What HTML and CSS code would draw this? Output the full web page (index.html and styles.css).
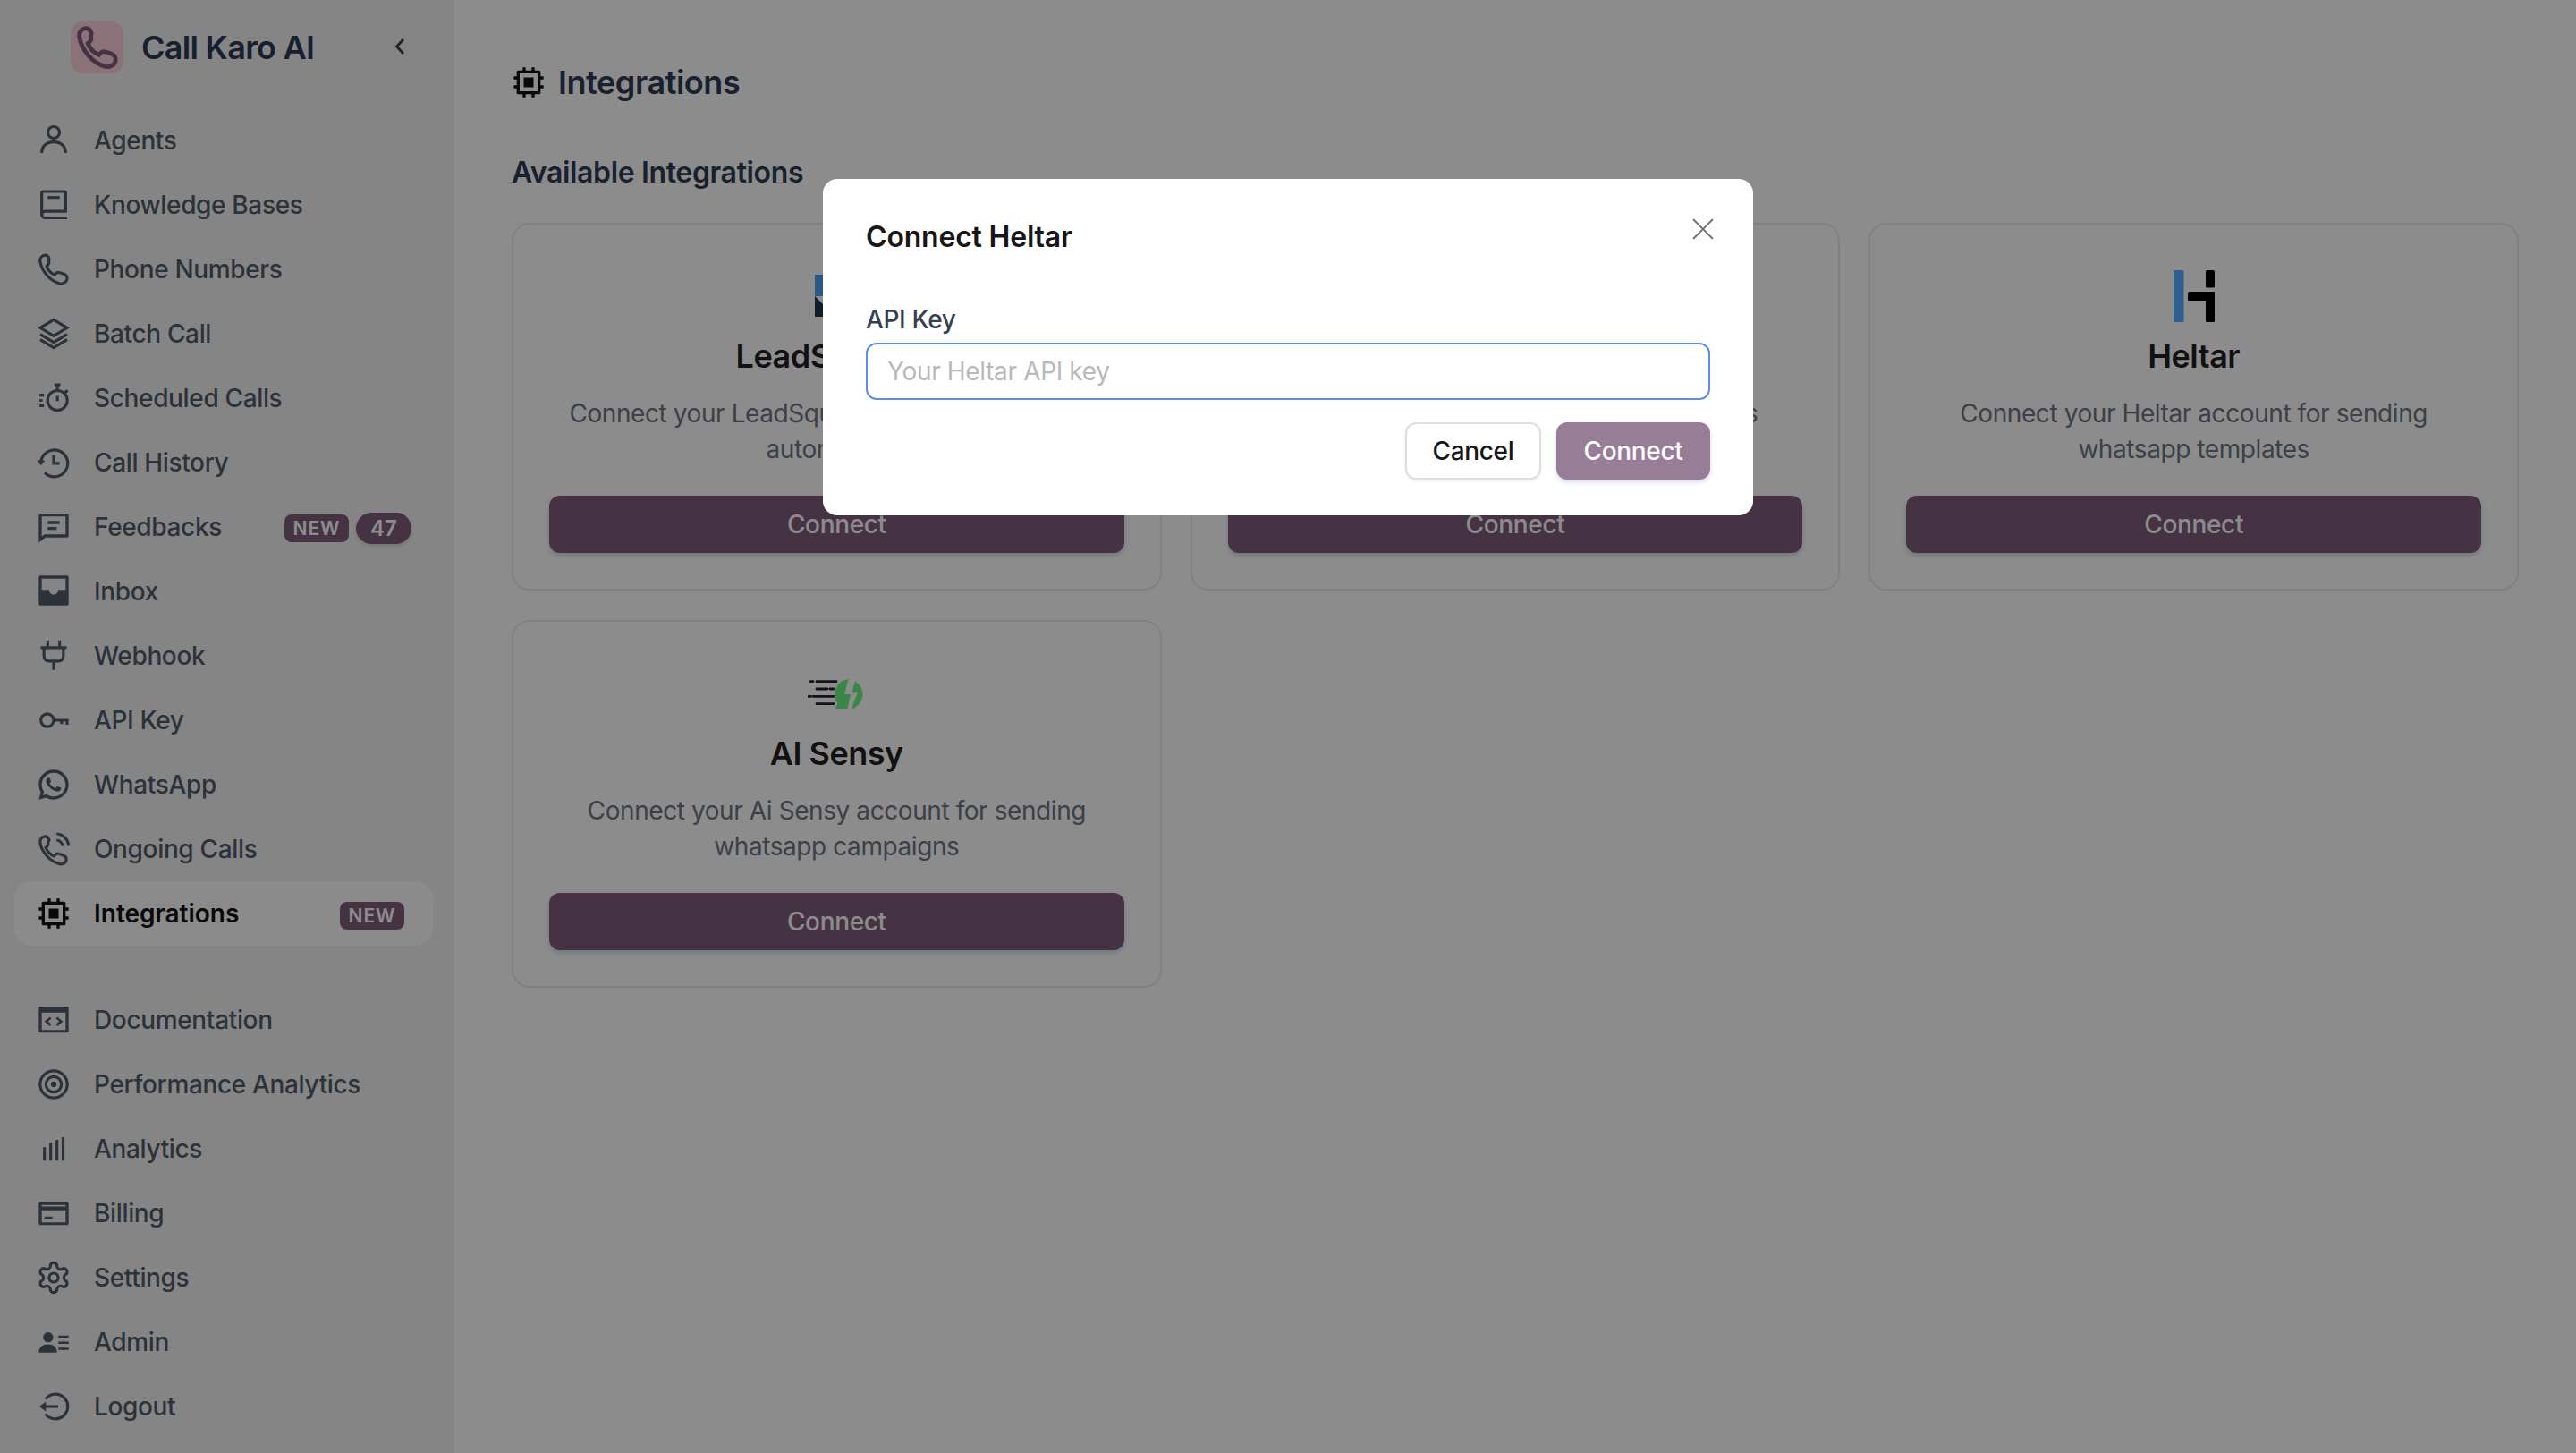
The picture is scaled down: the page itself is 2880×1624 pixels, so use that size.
FILE: index.html
```html
<!DOCTYPE html>
<html lang="en">
<head>
<meta charset="utf-8">
<title>Integrations</title>
<link rel="stylesheet" href="styles.css">
</head>
<body>
<div class="app">
  <aside class="sidebar">
    <div class="brand">
      <div class="brand-logo">
        <svg class="brand-phone" viewBox="0 0 24 24"><path d="M6.500 2.500C4 2.500 2.500 4.500 3 7c1 6 6.500 13 13 14.500 2.500.5 5-1 5-3.500 0-1.500-1-2.500-2.500-3l-2.500-.8c-1-.3-2 0-2.700.8l-.6.7c-2.500-1-4.500-3.200-5.500-5.700l.8-.7c.8-.7 1-1.700.7-2.700L9 5c-.5-1.500-1-2.500-2.500-2.500Z"/></svg>
      </div>
      <span class="brand-name">Call Karo AI</span>
      <svg class="collapse" viewBox="0 0 12 20"><path d="M10 2 2.500 10 10 18"/></svg>
    </div>
    <nav class="nav">
      <a class="item"><svg class="ico" viewBox="0 0 24 24"><circle cx="12" cy="6.600" r="3.900"/><path d="M4 20.400C4 15.500 7.500 13 12 13s8 2.500 8 7.400"/></svg>Agents</a>
      <a class="item"><svg class="ico" viewBox="0 0 24 24"><path d="M21 20.700H6.200A2.200 2.200 0 0 1 4 18.500V4a1 1 0 0 1 1-1h14a1 1 0 0 1 1 1v12.300H6.200A2.200 2.200 0 0 0 4 18.500"/><path d="M8 7h8"/></svg>Knowledge Bases</a>
      <a class="item"><svg class="ico" viewBox="0 0 24 24"><path d="M6.500 2.500C4 2.500 2.500 4.500 3 7c1 6 6.500 13 13 14.500 2.500.5 5-1 5-3.500 0-1.500-1-2.500-2.500-3l-2.500-.8c-1-.3-2 0-2.700.8l-.6.7c-2.500-1-4.500-3.200-5.500-5.700l.8-.7c.8-.7 1-1.700.7-2.700L9 5c-.5-1.500-1-2.500-2.500-2.500Z"/></svg>Phone Numbers</a>
      <a class="item"><svg class="ico" viewBox="0 0 24 24"><path d="M12 2.600 21 8l-9 5.400L3 8z"/><path d="m3 12.400 9 5.400 9-5.400"/><path d="m3 16.400 9 5.400 9-5.400" transform="translate(0 -.4)"/></svg>Batch Call</a>
      <a class="item"><svg class="ico" viewBox="0 0 24 24"><circle cx="14.500" cy="13.500" r="6.600"/><path d="M12.500 3h4M14.500 3v3M14.500 10.500v3.500M19.500 8.500l1.800-1.800M2.500 10h3M2.500 13.500h2M2.500 17h3"/></svg>Scheduled Calls</a>
      <a class="item"><svg class="ico" viewBox="0 0 24 24"><path d="M3.500 11.500A9 9 0 1 1 6 18.800"/><path class="solid" d="M.8 10.500h5.400L3.500 14z"/><path d="M12 7v5.500h4"/></svg>Call History</a>
      <a class="item"><svg class="ico solid" viewBox="0 0 24 24"><path d="M6.455 19 2 22.500V4a1 1 0 0 1 1-1h18a1 1 0 0 1 1 1v14a1 1 0 0 1-1 1H6.455ZM5.763 17H20V5H4v13.385L5.763 17ZM8 8h8v2H8V8Zm0 4h6v2H8v-2Z"/></svg>Feedbacks<span class="badges badges-double"><span class="badge-new">NEW</span><span class="badge-count">47</span></span></a>
      <a class="item"><svg class="ico solid" viewBox="0 0 24 24"><path fill-rule="evenodd" d="M3 1.400h18a1 1 0 0 1 1 1v18a1 1 0 0 1-1 1H3a1 1 0 0 1-1-1v-18a1 1 0 0 1 1-1ZM4 3.400V11h5c0 2 1.400 3.200 3 3.200s3-1.200 3-3.200h5V3.400H4Z"/></svg>Inbox</a>
      <a class="item"><svg class="ico" viewBox="0 0 24 24"><path d="M8 1.600v4.500M16 1.600v4.500M3.300 6.500h17.400M5.500 6.500v6a3 3 0 0 0 3 3h7a3 3 0 0 0 3-3v-6M12 15.500v6"/></svg>Webhook</a>
      <a class="item"><svg class="ico" viewBox="0 0 24 24"><circle cx="7.700" cy="12" r="4.300"/><path d="M12 12h9v3M17.300 12v2.500"/></svg>API Key</a>
      <a class="item"><svg class="ico solid" viewBox="0 0 24 24"><path d="M7.254 18.494 7.978 18.917C9.189 19.623 10.565 20 12.001 20 16.419 20 20.001 16.418 20.001 12 20.001 7.582 16.419 4 12.001 4 7.583 4 4.001 7.582 4.001 12 4.001 13.436 4.378 14.813 5.085 16.024L5.507 16.748 4.854 19.149 7.254 18.494ZM2.005 22 3.357 17.032C2.495 15.554 2.001 13.835 2.001 12 2.001 6.477 6.478 2 12.001 2 17.524 2 22.001 6.477 22.001 12 22.001 17.523 17.524 22 12.001 22 10.167 22 8.449 21.506 6.971 20.645L2.005 22ZM8.392 7.308C8.526 7.299 8.661 7.297 8.795 7.304 8.849 7.308 8.903 7.314 8.957 7.320 9.116 7.338 9.291 7.435 9.350 7.569 9.648 8.245 9.938 8.926 10.218 9.610 10.280 9.761 10.243 9.956 10.125 10.146 10.065 10.243 9.971 10.379 9.862 10.518 9.749 10.663 9.506 10.929 9.506 10.929 9.506 10.929 9.407 11.047 9.445 11.194 9.459 11.250 9.505 11.331 9.547 11.399 9.606 11.494 9.862 11.921 10.626 12.762 11.457 13.521 11.987 13.858 12.559 14.108 12.816 14.219 13.007 14.286 13.080 14.297 13.242 14.307 13.335 14.203 13.375 14.156 14.098 13.279 14.165 13.222 14.170 13.222 14.265 13.124 14.414 13.089 14.548 13.097 14.609 13.101 14.669 13.112 14.725 13.138 15.256 13.380 16.126 13.759 16.126 13.759L16.707 14.020C16.805 14.067 16.894 14.178 16.898 14.285 16.901 14.352 16.908 14.460 16.884 14.658 16.853 14.917 16.774 15.228 16.696 15.391 16.641 15.506 16.569 15.607 16.487 15.693 16.374 15.810 16.291 15.881 16.156 15.981 16.074 16.043 16.031 16.071 16.031 16.071 15.892 16.160 15.814 16.203 15.648 16.291 15.391 16.428 15.107 16.507 14.815 16.522 14.630 16.531 14.444 16.545 14.259 16.535 14.251 16.534 13.691 16.448 13.691 16.448 12.269 16.074 10.954 15.374 9.850 14.402 9.625 14.203 9.415 13.989 9.201 13.776 8.310 12.891 7.637 11.936 7.229 11.034 7.028 10.588 6.900 10.112 6.898 9.621 6.895 9.014 7.094 8.423 7.463 7.942 7.537 7.847 7.606 7.747 7.725 7.634 7.852 7.513 7.933 7.449 8.020 7.405 8.140 7.344 8.263 7.313 8.392 7.308Z"/></svg>WhatsApp</a>
      <a class="item"><svg class="ico" viewBox="0 0 24 24"><path d="M6.500 3.500C4 3.500 2.500 5.500 3 8c1 6 6.500 12.500 13 14 2.500.5 4.500-1 4.500-3 0-1.500-1-2.500-2.500-3l-2.500-.8c-1-.3-2 0-2.700.8l-.6.7c-2.500-1-4.500-3.200-5.500-5.700l.8-.7c.8-.7 1-1.700.7-2.700L9 6c-.5-1.500-1-2.500-2.500-2.500Z"/><path d="M14 1.800a8.500 8.500 0 0 1 8 8M14 6a4.500 4.500 0 0 1 4 4"/></svg>Ongoing Calls</a>
      <a class="item item-active"><svg class="ico solid" viewBox="0 0 24 24"><path d="M6 18H18V6H6V18ZM14 20H10V22H8V20H5C4.448 20 4 19.552 4 19V16H2V14H4V10H2V8H4V5C4 4.448 4.448 4 5 4H8V2H10V4H14V2H16V4H19C19.552 4 20 4.448 20 5V8H22V10H20V14H22V16H20V19C20 19.552 19.552 20 19 20H16V22H14V20ZM8.700 8.700H15.300V15.300H8.700V8.700Z"/></svg>Integrations<span class="badges badges-single"><span class="badge-new">NEW</span></span></a>
    </nav>
    <nav class="nav nav-lower">
      <a class="item"><svg class="ico solid" viewBox="0 0 24 24"><path fill-rule="evenodd" d="M3 3h18a1 1 0 0 1 1 1v15.600a1 1 0 0 1-1 1H3a1 1 0 0 1-1-1V4a1 1 0 0 1 1-1ZM4 7v11.700h16V7H4Z"/><path class="glyph" d="M10 10.500 7 13l3 2.500M14 10.500l3 2.500-3 2.500"/></svg>Documentation</a>
      <a class="item"><svg class="ico" viewBox="0 0 24 24"><circle cx="12" cy="12" r="9.100"/><circle cx="12" cy="12" r="5.200"/><circle class="solid" cx="12" cy="12" r="1.900"/></svg>Performance Analytics</a>
      <a class="item"><svg class="ico" viewBox="0 0 24 24"><path d="M5.800 20v-9M10 20V8M14.200 20V6M18.300 20V4.200"/></svg>Analytics</a>
      <a class="item"><svg class="ico solid" viewBox="0 0 24 24"><path fill-rule="evenodd" d="M3 4.600h18a1 1 0 0 1 1 1V19a1 1 0 0 1-1 1H3a1 1 0 0 1-1-1V5.600a1 1 0 0 1 1-1ZM4 6.500v1h16v-1H4Zm0 3.500v8.200h16V10H4Zm1.800 4.300h5.500v1.500H5.800v-1.500Z"/></svg>Billing</a>
      <a class="item"><svg class="ico" viewBox="0 0 24 24"><path d="M12.220 2h-.44a2 2 0 0 0-2 2v.18a2 2 0 0 1-1 1.730l-.43.25a2 2 0 0 1-2 0l-.15-.08a2 2 0 0 0-2.730.73l-.22.38a2 2 0 0 0 .73 2.730l.15.1a2 2 0 0 1 1 1.720v.51a2 2 0 0 1-1 1.740l-.15.09a2 2 0 0 0-.73 2.730l.22.38a2 2 0 0 0 2.730.73l.15-.08a2 2 0 0 1 2 0l.43.25a2 2 0 0 1 1 1.730V20a2 2 0 0 0 2 2h.44a2 2 0 0 0 2-2v-.18a2 2 0 0 1 1-1.730l.43-.25a2 2 0 0 1 2 0l.15.08a2 2 0 0 0 2.730-.73l.22-.39a2 2 0 0 0-.73-2.730l-.15-.08a2 2 0 0 1-1-1.740v-.5a2 2 0 0 1 1-1.740l.15-.09a2 2 0 0 0 .73-2.730l-.22-.38a2 2 0 0 0-2.730-.73l-.15.08a2 2 0 0 1-2 0l-.43-.25a2 2 0 0 1-1-1.730V4a2 2 0 0 0-2-2z"/><circle cx="12" cy="12" r="3"/></svg>Settings</a>
      <a class="item"><svg class="ico solid" viewBox="0 0 24 24"><circle cx="8.300" cy="8.800" r="3.400"/><path d="M2 19c0-3.500 2.500-5.500 6.200-5.500s6 2 6 5.500H2Z"/><path d="M15.200 7.700H22v1.500h-6.800zM15.200 11.700H22v1.500h-6.800zM15.200 15.700H22v1.500h-6.800z"/></svg>Admin</a>
      <a class="item"><svg class="ico" viewBox="0 0 24 24"><path d="M6.500 7a8.300 8.300 0 1 1 0 10"/><path d="M4.500 12H15"/><path class="solid" d="M2.300 12 6.800 8.700v6.600z"/></svg>Logout</a>
    </nav>
  </aside>
  <main class="main">
    <header class="page-title">
      <svg class="title-ico" viewBox="0 0 24 24"><path d="M6 18H18V6H6V18ZM14 20H10V22H8V20H5C4.448 20 4 19.552 4 19V16H2V14H4V10H2V8H4V5C4 4.448 4.448 4 5 4H8V2H10V4H14V2H16V4H19C19.552 4 20 4.448 20 5V8H22V10H20V14H22V16H20V19C20 19.552 19.552 20 19 20H16V22H14V20ZM8.700 8.700H15.300V15.300H8.700V8.700Z"/></svg>
      <h1>Integrations</h1>
    </header>
    <h2 class="section-title">Available Integrations</h2>
    <section class="grid">
      <article class="card">
        <div class="card-logo">
          <svg class="logo-lead" viewBox="0 0 48 47"><path class="lead-blue" d="M0 0h48v24H0z"/><path class="lead-dark" d="M0 24 23 47H0z"/></svg>
        </div>
        <h3>LeadSquared</h3>
        <p>Connect your LeadSquared account for calling automations</p>
        <button class="btn-wide">Connect</button>
      </article>
      <article class="card">
        <div class="card-logo"></div>
        <h3>Zapier</h3>
        <p>Connect your Zapier account for bookings</p>
        <button class="btn-wide">Connect</button>
      </article>
      <article class="card">
        <div class="card-logo">
          <svg class="logo-heltar" viewBox="0 0 46 58"><rect class="helt-blue" width="11.500" height="58" rx="1.500"/><rect x="36" width="10" height="19.500" rx="1.500"/><path d="M17.500 24H46v32.500a1.500 1.500 0 0 1-1.500 1.500h-7a1.500 1.500 0 0 1-1.500-1.500V34H17.500a1.500 1.500 0 0 1-1.500-1.500v-7a1.500 1.500 0 0 1 1.500-1.500Z"/></svg>
        </div>
        <h3>Heltar</h3>
        <p>Connect your Heltar account for sending whatsapp templates</p>
        <button class="btn-wide">Connect</button>
      </article>
      <article class="card">
        <div class="card-logo">
          <svg class="logo-sensy" viewBox="0 0 64 34"><path class="sensy-lines" d="M3 2.700h3M10 2.700h22M10 11h12M25 11h4M0 19.300h3.400M6 19.300h23M10 27.700h12M24 27.700h5"/><path class="sensy-green" d="M45.500 .3A17 17 0 0 0 33.700 27.700L30.300 33H44.500L48 17H41ZM53 2.500A17 17 0 0 1 48.500 33.700L56 14.500H49.500Z"/></svg>
        </div>
        <h3>AI Sensy</h3>
        <p>Connect your Ai Sensy account for sending whatsapp campaigns</p>
        <button class="btn-wide">Connect</button>
      </article>
    </section>
  </main>
</div>
<div class="overlay">
  <div class="modal">
    <button class="close" aria-label="Close"><svg viewBox="0 0 24 24"><path d="M1 1 23 23M23 1 1 23"/></svg></button>
    <h2 class="modal-title">Connect Heltar</h2>
    <label class="field-label" for="key">API Key</label>
    <input id="key" class="field" placeholder="Your Heltar API key">
    <div class="actions">
      <button class="btn-cancel">Cancel</button>
      <button class="btn-connect">Connect</button>
    </div>
  </div>
</div>
</body>
</html>
```
FILE: styles.css
```css
* { box-sizing: border-box; }
html, body { margin: 0; height: 100%; }
body { font-family: Inter, "Liberation Sans", sans-serif; letter-spacing: -.35px; background: #fff; color: #111827; overflow: hidden; }
button, input { letter-spacing: inherit; }
.app { display: flex; height: 1624px; }

.sidebar { width: 508px; flex: none; background: #f2f3f5; padding: 24px 24px 0 16px; }
.brand { display: flex; align-items: center; height: 58px; padding-left: 63px; }
.brand-logo { width: 59px; height: 58px; border-radius: 14px; background: #fbcfdb; display: flex; align-items: center; justify-content: center; }
.brand-phone { width: 54px; height: 54px; fill: none; stroke: #7f5d7d; stroke-width: 2.1; }
.brand-name { margin-left: 20px; font-size: 36px; font-weight: 600; letter-spacing: -.7px; color: #2c3a55; }
.collapse { width: 12px; height: 20px; margin-left: auto; margin-right: 31px; margin-top: -2px; fill: none; stroke: #374151; stroke-width: 3; }

.nav { margin-top: 39px; }
.nav-lower { margin-top: 47px; }
.item { display: flex; align-items: center; height: 72px; padding-left: 24px; border-radius: 20px; font-size: 28px; font-weight: 500; color: #505b6a; }
.item-active { background: #fdfdfd; color: #111; font-weight: 600; letter-spacing: 0; }
.ico { width: 40px; height: 40px; flex: none; margin-right: 25px; fill: none; stroke: currentColor; stroke-width: 1.9; }
.ico.solid, .solid { fill: currentColor; stroke: none; }
.glyph { fill: none; stroke: currentColor; stroke-width: 1.7; }

.badges { display: flex; align-items: center; gap: 8px; margin-left: auto; position: relative; }
.badges-double { margin-right: 24px; top: 1px; }
.badges-single { margin-right: 32px; top: 2px; }
.badge-new { display: block; width: 72px; height: 31px; border-radius: 8px; background: #7f5d7d; color: #fff; font-size: 21px; font-weight: 600; line-height: 31px; text-align: center; letter-spacing: 1px; }
.badge-count { display: block; width: 62px; height: 35px; border-radius: 18px; background: #7f5d7d; color: #fff; font-size: 24px; font-weight: 600; line-height: 35px; text-align: center; letter-spacing: 0; box-shadow: 0 2px 4px rgba(0,0,0,.15); }

.main { flex: 1; min-width: 0; padding: 72px 64px 0; }
.page-title { display: flex; align-items: center; height: 40px; }
.title-ico { width: 40px; height: 40px; margin-left: -1px; margin-right: 13px; fill: #111; }
.page-title h1 { margin: 0; font-size: 36px; font-weight: 600; letter-spacing: -.45px; color: #2f3b55; }
.section-title { margin: 61px 0 36px; height: 40px; line-height: 40px; font-size: 32px; font-weight: 600; color: #2f3b55; }
.grid { display: grid; grid-template-columns: repeat(3, 1fr); gap: 33px 32px; }
.card { border: 2px solid #ececee; border-radius: 20px; padding: 40px; text-align: center; }
.card-logo { height: 80px; display: flex; align-items: center; justify-content: center; }
.card h3 { margin: 0 0 16px; height: 55px; line-height: 55px; font-size: 36px; font-weight: 600; letter-spacing: -.5px; color: #1f1f1f; }
.card p { margin: 0 0 32px; height: 80px; font-size: 28px; line-height: 40px; letter-spacing: -.42px; color: #6d7684; }
.btn-wide { display: block; width: 100%; height: 64px; border: 0; border-radius: 12px; background: #7f5d7d; color: #fff; font: 500 28px Inter, sans-serif; box-shadow: 0 3px 5px rgba(120,140,180,.35); }

.logo-heltar { width: 46px; height: 58px; }
.helt-blue { fill: #57aeff; }
.logo-sensy { width: 64px; height: 34px; position: relative; top: 1px; }
.sensy-lines { fill: none; stroke: #1f2430; stroke-width: 2.800; stroke-linecap: round; }
.sensy-green { fill: #6bf285; }
.logo-lead { width: 48px; height: 47px; position: relative; top: -1px; }
.lead-blue { fill: #4d9ff0; }
.lead-dark { fill: #1d3450; }

.overlay { position: fixed; inset: 0; background: rgba(0,0,0,.45); display: flex; justify-content: center; align-items: flex-start; padding-top: 200px; }
.modal { position: relative; width: 1040px; height: 376px; padding: 48px 48px 40px; background: #fff; border-radius: 16px; }
.modal-title { margin: 0 0 58px; height: 34px; line-height: 34px; font-size: 32px; font-weight: 600; letter-spacing: -.2px; color: #171717; }
.field-label { display: block; height: 34px; line-height: 34px; font-size: 28px; font-weight: 500; color: #374151; }
.field { display: block; width: 100%; height: 64px; margin-top: 9px; padding: 0 22px; border: 2px solid #5b8def; border-radius: 12px; font: 400 28px Inter, sans-serif; color: #111; outline: 0; }
.field::placeholder { color: #b9b9b9; opacity: 1; }
.actions { display: flex; justify-content: flex-end; gap: 17px; margin-top: 25px; }
.btn-cancel { width: 152px; height: 64px; border: 2px solid #dedede; border-radius: 12px; background: #fff; color: #171717; font: 500 28px Inter, sans-serif; box-shadow: 0 2px 3px rgba(0,0,0,.06); }
.btn-connect { width: 172px; height: 64px; border: 0; border-radius: 12px; background: #7f5d7d; opacity: .8; color: #fff; font: 500 28px Inter, sans-serif; box-shadow: 0 3px 5px rgba(120,140,180,.35); }
.close { position: absolute; top: 44px; right: 44px; width: 24px; height: 24px; padding: 0; border: 0; background: none; }
.close svg { display: block; width: 24px; height: 24px; fill: none; stroke: #777; stroke-width: 2; }
```
